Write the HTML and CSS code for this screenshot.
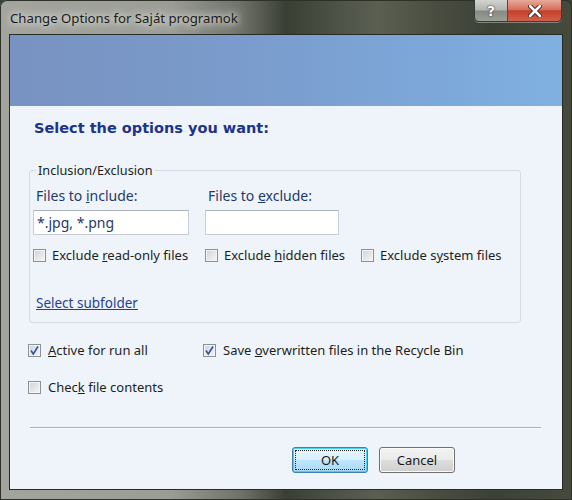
FILE: index.html
```html
<!DOCTYPE html>
<html>
<head>
<meta charset="utf-8">
<link rel="stylesheet" href="styles.css">
</head>
<body>
<div class="window">
  <div class="titlebar">
    <span class="title">Change Options for Saját programok</span>
    <div class="caption-btns">
      <span class="cb help">?</span>
      <span class="cb close">
        <svg width="14" height="12" viewBox="0 0 14 12"><path d="M2 1 L12 11 M12 1 L2 11" stroke="#3a1a14" stroke-width="4.4" stroke-linecap="round"/><path d="M2 1 L12 11 M12 1 L2 11" stroke="#fff" stroke-width="2.6" stroke-linecap="round"/></svg>
      </span>
    </div>
  </div>
  <div class="client">
    <div class="band"></div>
    <div class="content">
      <h1 class="heading">Select the options you want:</h1>
      <fieldset class="group">
        <legend class="legend">Inclusion/Exclusion</legend>
        <div class="grid">
          <span class="field-label">Files to <u>i</u>nclude:</span>
          <span class="field-label">Files to <u>e</u>xclude:</span>
          <span></span>
          <div class="input wide">*.jpg, *.png</div>
          <div class="input narrow"></div>
          <span></span>
          <label class="check"><span class="box"></span><span class="txt">Exclude <u>r</u>ead-only files</span></label>
          <label class="check"><span class="box"></span><span class="txt">Exclude <u>h</u>idden files</span></label>
          <label class="check"><span class="box"></span><span class="txt">Exclude s<u>y</u>stem files</span></label>
        </div>
        <a class="link">Select subfolder</a>
      </fieldset>
      <div class="options">
        <label class="check opt"><span class="box checked"><svg width="11" height="11" viewBox="0 0 11 11"><path d="M2 5.5 L4.3 9 L9 1.5" fill="none" stroke="#3c5196" stroke-width="1.6"/></svg></span><span class="txt"><u>A</u>ctive for run all</span></label>
        <label class="check opt"><span class="box checked"><svg width="11" height="11" viewBox="0 0 11 11"><path d="M2 5.5 L4.3 9 L9 1.5" fill="none" stroke="#3c5196" stroke-width="1.6"/></svg></span><span class="txt">Save <u>o</u>verwritten files in the Recycle Bin</span></label>
        <label class="check opt"><span class="box"></span><span class="txt">Chec<u>k</u> file contents</span></label>
      </div>
      <div class="sep"></div>
      <div class="buttons">
        <button class="btn default"><span class="focus">OK</span></button>
        <button class="btn">Cancel</button>
      </div>
    </div>
  </div>
</div>
</body>
</html>
```

FILE: styles.css
```css
* { box-sizing: border-box; }
html, body { margin: 0; padding: 0; background: #3b4034; }
body { width: 572px; height: 500px; overflow: hidden; font-family: "Noto Sans", "Open Sans", sans-serif; font-size: 13px; }

.window {
  width: 572px;
  height: 500px;
  padding: 0 9px 0 9px;
  display: flex;
  flex-direction: column;
  border-radius: 7px 7px 0 0;
  background:
    linear-gradient(90deg, #a2a49d 0%, #9a9c95 30%, #6f7268 42%, #3a3f34 50%, #4c5146 58%, #5b5f52 66%, #4a4e41 76%, #3c4136 86%, #454a3d 100%);
  box-shadow: inset 0 0 0 1px #2d3127;
}

.titlebar {
  height: 34px;
  display: flex;
  justify-content: space-between;
  align-items: flex-start;
}
.title {
  padding-top: 9px;
  padding-left: 1px;
  line-height: 18px;
  font-size: 13.2px;
  color: #1b1b1b;
  text-shadow: 0 0 6px #e6e7e2, 0 0 10px #d8d9d3, 0 0 14px #c8cac2;
}
.caption-btns {
  display: flex;
  margin-right: 1px;
  border: 1px solid #383b36;
  border-top: none;
  border-radius: 0 0 5px 5px;
  overflow: hidden;
  box-shadow: 0 1px 0 rgba(255,255,255,0.35);
}
.cb {
  height: 21px;
  display: flex;
  align-items: center;
  justify-content: center;
  font-family: "DejaVu Sans", sans-serif;
  font-weight: bold;
  color: #fff;
}
.help {
  width: 33px;
  font-size: 14px;
  background: linear-gradient(180deg, #d3d4d1 0%, #b2b4ae 48%, #878983 52%, #9c9e98 100%);
  border-right: 1px solid #4a4b47;
  text-shadow: 0 0 2px #333, 0 0 1px #222;
  border-radius: 0 0 0 4px;
}
.close {
  width: 53px;
  background: linear-gradient(180deg, #e7a899 0%, #d8705d 45%, #c3402a 52%, #d2604a 100%);
  border-radius: 0 0 4px 0;
}

.client {
  width: 554px;
  height: 456px;
  border: 1px solid #272b23;
  background: #eff4fa;
  display: flex;
  flex-direction: column;
}
.band {
  height: 71px;
  flex: none;
  background: linear-gradient(90deg, #7892c1 0%, #7a9bcb 40%, #7ca7d8 75%, #80b1e1 100%);
}

.heading {
  margin: 14px 0 0 24px;
  font-family: "DejaVu Sans", Verdana, sans-serif;
  font-size: 14.5px;
  line-height: 16px;
  font-weight: bold;
  color: #20338a;
}

.group {
  margin: 26px 0 0 19px;
  width: 492px;
  padding: 0 0 10px 3px;
  border: 1px solid #d2dce6;
  border-radius: 3px;
  min-width: 0;
}
.legend {
  margin-left: 3px;
  padding: 0 2px;
  line-height: 16px;
  font-size: 12.7px;
  color: #1e1e1e;
}
.grid {
  margin-top: 10px;
  display: grid;
  grid-template-columns: 172px 156px auto;
}
.field-label {
  padding-left: 3px;
  line-height: 16px;
  font-size: 14px;
  color: #1e3a6c;
}
.input {
  margin-top: 6px;
  height: 25px;
  border: 1px solid #c9ced6;
  border-top-color: #aeb3bb;
  background: #fff;
  padding: 3px 0 0 3px;
  line-height: 17px;
  font-size: 14px;
  color: #26386a;
}
.wide { width: 156px; }
.narrow { width: 134px; }

.check {
  display: flex;
  align-items: center;
  line-height: 16px;
  color: #1e1e1e;
  white-space: nowrap;
}
.grid .check { margin-top: 12px; }
.box {
  flex: none;
  width: 13px;
  height: 13px;
  margin-right: 6px;
  border: 1px solid #8f9092;
  background: linear-gradient(135deg, #d0d3d8 0%, #e6e8ea 60%, #f6f6f6 100%);
  box-shadow: inset 0 0 0 1px #f4f4f4;
  display: flex;
  align-items: center;
  justify-content: center;
}
.box.checked {
  background: linear-gradient(135deg, #c9d3e6 0%, #e3e9f3 60%, #f4f6fa 100%);
}
.link {
  display: inline-block;
  margin: 32px 0 0 3px;
  line-height: 16px;
  font-size: 13.5px;
  color: #1f3f99;
  text-decoration: underline;
}

.options {
  margin: 19px 0 0 18px;
  display: grid;
  grid-template-columns: 175px auto;
  row-gap: 21px;
}
.opt .box { margin-right: 7px; }

.sep {
  margin: 32px 21px 0 20px;
  height: 1px;
  background: #a3b1c4;
  box-shadow: 0 1px 0 #fbfdff;
}

.buttons {
  margin-top: 19px;
  display: flex;
  justify-content: flex-end;
  gap: 11px;
  padding-right: 107px;
}
.btn {
  width: 76px;
  height: 26px;
  border: 1px solid #707070;
  border-radius: 3px;
  font-family: "Noto Sans", "Open Sans", sans-serif;
  font-size: 13px;
  color: #1a1a1a;
  padding: 0;
  background: linear-gradient(180deg, #f3f3f3 0%, #ebebeb 48%, #dddddd 52%, #cfcfcf 100%);
  box-shadow: inset 0 0 0 1px #fafafa;
}
.btn.default {
  border-color: #3c7fb1;
  background: linear-gradient(180deg, #eaf6fd 0%, #d9f0fc 48%, #bee6fd 52%, #a7d9f5 100%);
  box-shadow: inset 0 0 0 1px #48d0f0;
  padding: 2px;
}
.focus {
  display: flex;
  align-items: center;
  justify-content: center;
  height: 100%;
  border: 1px dotted #222;
}
```
